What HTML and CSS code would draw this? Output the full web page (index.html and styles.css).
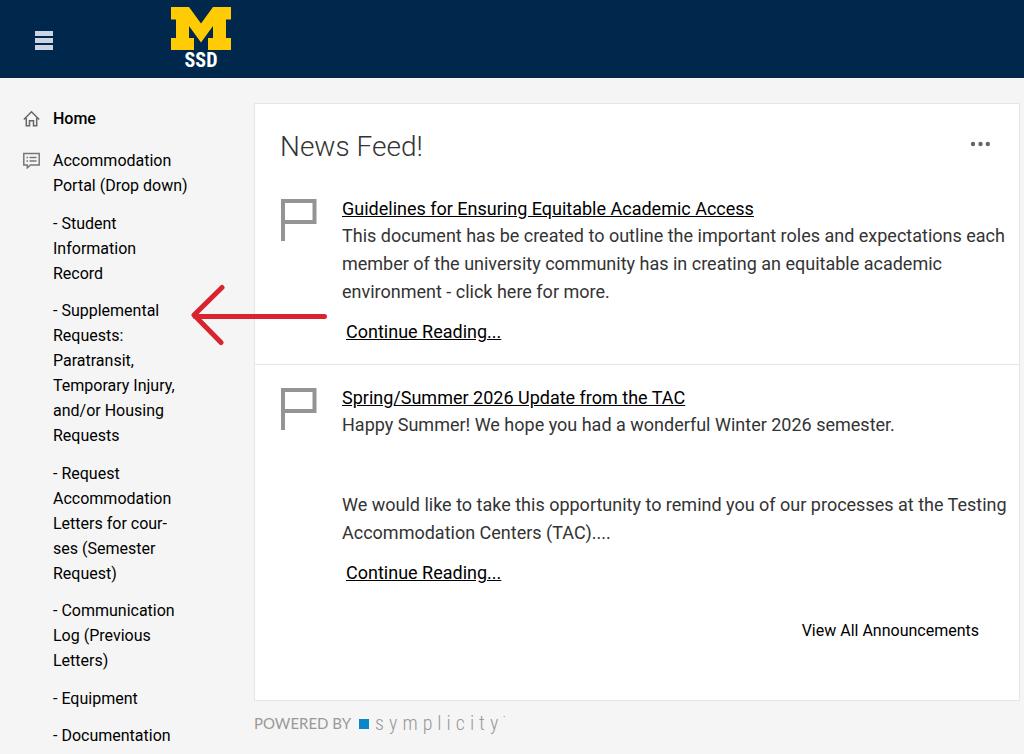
FILE: index.html
```html
<!DOCTYPE html>
<html lang="en">
<head>
  <meta charset="UTF-8">
  <meta name="viewport" content="width=device-width, initial-scale=1">
  <title>SSD - Home</title>
  <link rel="stylesheet" href="styles.css">
</head>
<body>
  <header class="topbar">
    <button class="menu-btn" type="button" aria-label="Toggle menu"><span></span><span></span><span></span></button>
    <a href="#" class="logo" aria-label="Michigan SSD home">
      <svg width="60" height="43" viewBox="0 0 60 43" aria-hidden="true">
        <path fill="#ffcb05" d="M0 0H18L30 16.500 42 0H60V12.500H55V31H60V43H37V31H42V19L30 35.500 18 19V31H23V43H0V31H5V12.500H0Z"/>
      </svg>
      <span>SSD</span>
    </a>
  </header>

  <div class="layout">
    <nav class="sidebar">
      <a href="#" class="nav-item active">
        <svg width="17" height="17" viewBox="0 0 17 17" fill="none" stroke="#666" stroke-width="1.500" aria-hidden="true">
          <path d="M.8 9.500 8.500 1.800 16.200 9.500M3.300 8V15.700H6.500V10.700H10.500V15.700H13.700V8"/>
        </svg>
        <span>Home</span>
      </a>
      <a href="#" class="nav-item">
        <svg width="17" height="17" viewBox="0 0 17 17" fill="none" stroke="#777" stroke-width="1.500" aria-hidden="true">
          <path d="M.8 1.500H16.200V13H7.500L4.300 15.800V13H.8ZM3.500 5.500H5M6.500 5.500H13.500M3.500 9H5M6.500 9H13.500"/>
        </svg>
        <span>Accommodation Portal (Drop down)</span>
      </a>
      <ul class="subnav">
        <li><a href="#">- Student Information Record</a></li>
        <li class="marked">
          <a href="#">- Supplemental Requests: Paratransit, Temporary Injury, and/or Housing Requests</a>
          <svg class="arrow" width="140" height="64" viewBox="0 0 140 64" fill="none" stroke="#d9232e" stroke-width="5" stroke-linecap="round" stroke-linejoin="round" aria-hidden="true">
            <path d="M134.500 33.500H5M32 4.500 4 32 31 59.500"/>
          </svg>
        </li>
        <li><a href="#">- Request Accommodation Letters for cour&shy;ses (Semester Request)</a></li>
        <li><a href="#">- Communication Log (Previous Letters)</a></li>
        <li><a href="#">- Equipment</a></li>
        <li><a href="#">- Documentation</a></li>
      </ul>
    </nav>

    <main class="content">
      <section class="card">
        <div class="card-head">
          <h1>News Feed!</h1>
          <button class="more-btn" type="button" aria-label="More options">
            <svg width="20" height="6" viewBox="0 0 20 6" fill="#666" aria-hidden="true">
              <circle cx="3" cy="3" r="2.200"/><circle cx="10.500" cy="3" r="2.200"/><circle cx="17.800" cy="3" r="2.200"/>
            </svg>
          </button>
        </div>

        <article class="news">
          <svg class="flag" width="37" height="43" viewBox="0 0 37 43" fill="none" stroke="#949494" stroke-width="4" aria-hidden="true">
            <path d="M3 42V2H34.500V23H3"/>
          </svg>
          <div class="news-body">
            <a href="#" class="news-title">Guidelines for Ensuring Equitable Academic Access</a>
            <p>This document has be created to outline the important roles and expectations each member of the university community has in creating an equitable academic environment - click here for more.</p>
            <a href="#" class="read-more">Continue Reading...</a>
          </div>
        </article>

        <article class="news">
          <svg class="flag" width="37" height="43" viewBox="0 0 37 43" fill="none" stroke="#949494" stroke-width="4" aria-hidden="true">
            <path d="M3 42V2H34.500V23H3"/>
          </svg>
          <div class="news-body">
            <a href="#" class="news-title">Spring/Summer 2026 Update from the TAC</a>
            <p>Happy Summer! We hope you had a wonderful Winter 2026 semester.</p>
            <p class="spaced">We would like to take this opportunity to remind you of our processes at the Testing Accommodation Centers (TAC)....</p>
            <a href="#" class="read-more">Continue Reading...</a>
          </div>
        </article>

        <a href="#" class="view-all">View All Announcements</a>
      </section>

      <footer class="powered">
        <span class="by">POWERED BY</span>
        <span class="square"></span>
        <span class="brand">symplicity</span><sup>•</sup>
      </footer>
    </main>
  </div>
</body>
</html>
```
FILE: styles.css
```css
* { box-sizing: border-box; }
body {
  margin: 0;
  display: flex; flex-direction: column;
  min-height: 100vh;
  background: #f5f5f5;
  color: #000;
  font-family: Roboto, "Liberation Sans", sans-serif;
  font-size: 16px; line-height: 25px;
}
a { color: inherit; }
button { border: 0; background: none; padding: 0; cursor: pointer; }

.topbar {
  display: flex; align-items: center;
  flex: none;
  height: 78px; padding-left: 35px;
  background: #00274c;
}
.menu-btn { display: flex; flex-direction: column; gap: 2px; width: 18px; margin-top: 3px; }
.menu-btn span { height: 5px; background: #cbd5e3; }
.logo {
  display: flex; flex-direction: column; align-items: center;
  margin-left: 118px;
  text-decoration: none;
}
.logo svg { display: block; }
.logo span {
  color: #fff;
  font-family: "Roboto Condensed", Roboto, sans-serif;
  font-size: 20px; font-weight: 700; line-height: 21px;
}

.layout { display: flex; flex: 1; }
.sidebar { flex: 0 0 254px; padding: 28px 60px 0 23px; }
.nav-item { display: flex; gap: 13px; margin-bottom: 17px; text-decoration: none; }
.nav-item svg { flex: none; margin-top: 4px; }
.nav-item.active { font-weight: 500; }
.subnav { list-style: none; margin: -4px 0 0 30px; padding: 0; }
.subnav li { width: 130px; margin-bottom: 12px; }
.subnav li:nth-child(even) { margin-bottom: 13px; }
.subnav li:last-child { margin-bottom: 0; }
.subnav a { text-decoration: none; }
.marked { position: relative; }
.arrow { position: absolute; left: 137px; top: -15px; z-index: 2; }

.content { flex: 1; min-width: 0; padding: 25px 4px 0 0; }
.card { background: #fff; border: 1px solid #e6e6e6; padding-bottom: 57px; }
.card-head { display: flex; justify-content: space-between; padding: 25px 29px 0 25px; }
h1 { margin: 0; color: #333; font-size: 28px; font-weight: 300; line-height: 36px; }
.more-btn { display: flex; align-items: center; height: 30px; }

.news {
  display: flex; gap: 25px;
  padding: 30px 12px 19px 25px;
  font-size: 18px; line-height: 27px;
}
.news + .news { border-top: 1px solid #e6e6e6; padding-top: 19px; }
.flag { flex: none; margin-top: 4px; }
.news p { margin: 0; color: #333; line-height: 28px; }
.news p.spaced { margin-top: 52px; }
.read-more { display: inline-block; margin: 12px 4px 0; }
.view-all {
  display: block; padding: 13px 40px 0;
  text-align: right; text-decoration: none;
}

.powered { display: flex; align-items: center; margin-top: 10px; color: #999; }
.by { font-family: Lato, sans-serif; font-size: 15px; }
.square { width: 10px; height: 10px; margin: 0 6px 0 8px; background: #0a87c9; }
.brand {
  font-family: "Roboto Condensed", Roboto, sans-serif;
  font-size: 20px; font-weight: 300; letter-spacing: 5px;
}
.powered sup { font-size: 6px; line-height: 12px; align-self: flex-start; }
```
